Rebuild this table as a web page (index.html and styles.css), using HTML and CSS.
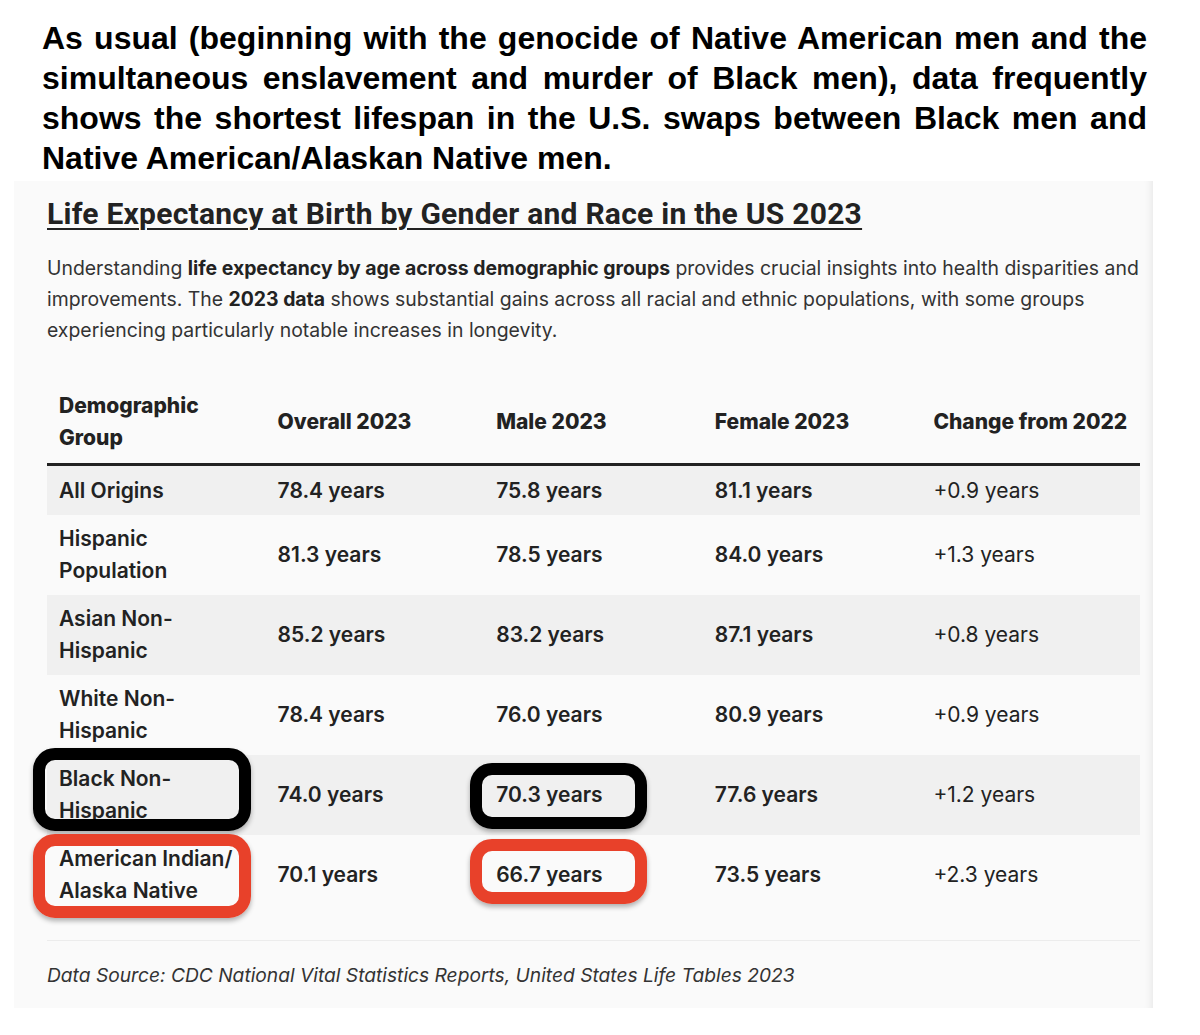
FILE: index.html
```html
<!DOCTYPE html>
<html lang="en">
<head>
<meta charset="utf-8">
<title>Life Expectancy at Birth by Gender and Race in the US 2023</title>
<link rel="stylesheet" href="styles.css">
</head>
<body>
<p class="intro">As usual (beginning with the genocide of Native American men and the simultaneous enslavement and murder of Black men), data frequently shows the shortest lifespan in the U.S. swaps between Black men and Native American/Alaskan Native men.</p>
<section class="card">
  <h2 class="title">Life Expectancy at Birth by Gender and Race in the US 2023</h2>
  <p class="lead">Understanding <strong>life expectancy by age across demographic groups</strong> provides crucial insights into health disparities and improvements. The <strong>2023 data</strong> shows substantial gains across all racial and ethnic populations, with some groups experiencing particularly notable increases in longevity.</p>
  <div class="table-wrap">
    <table class="data">
      <thead>
        <tr><th>Demographic Group</th><th>Overall 2023</th><th>Male 2023</th><th>Female 2023</th><th>Change from 2022</th></tr>
      </thead>
      <tbody>
        <tr><td class="grp">All Origins</td><td>78.4 years</td><td>75.8 years</td><td>81.1 years</td><td class="chg">+0.9 years</td></tr>
        <tr><td class="grp">Hispanic Population</td><td>81.3 years</td><td>78.5 years</td><td>84.0 years</td><td class="chg">+1.3 years</td></tr>
        <tr><td class="grp">Asian Non-Hispanic</td><td>85.2 years</td><td>83.2 years</td><td>87.1 years</td><td class="chg">+0.8 years</td></tr>
        <tr><td class="grp">White Non-Hispanic</td><td>78.4 years</td><td>76.0 years</td><td>80.9 years</td><td class="chg">+0.9 years</td></tr>
        <tr><td class="grp">Black Non-Hispanic</td><td>74.0 years</td><td>70.3 years</td><td>77.6 years</td><td class="chg">+1.2 years</td></tr>
        <tr><td class="grp">American Indian/ Alaska Native</td><td>70.1 years</td><td>66.7 years</td><td>73.5 years</td><td class="chg">+2.3 years</td></tr>
      </tbody>
    </table>
    <span class="mark mark-black mark-grp-black"></span>
    <span class="mark mark-red mark-grp-red"></span>
    <span class="mark mark-black mark-male-black"></span>
    <span class="mark mark-red mark-male-red"></span>
  </div>
  <hr class="rule">
  <p class="source">Data Source: CDC National Vital Statistics Reports, United States Life Tables 2023</p>
</section>
</body>
</html>
```

FILE: styles.css
```css
html, body {
  margin: 0;
  padding: 0;
  background: #ffffff;
}

body {
  padding: 18px 0 0 0;
}

.intro {
  margin: 0 53px 0 42px;
  font-family: "Liberation Sans", Arial, sans-serif;
  font-weight: 700;
  font-size: 32px;
  line-height: 40px;
  color: #000;
  text-align: justify;
}

.card {
  margin: 3px 0 0 14px;
  width: 1139px;
  box-sizing: border-box;
  background: #fafafa;
  padding: 15px 13px 17px 33px;
  box-shadow: inset -9px 0 8px -8px rgba(0, 0, 0, 0.09);
}

.title {
  margin: 0;
  font-family: Roboto, "Liberation Sans", sans-serif;
  font-weight: 700;
  font-size: 30px;
  line-height: 36px;
  letter-spacing: 0.25px;
  color: #222;
  text-decoration: underline;
  text-decoration-thickness: 2px;
  text-underline-offset: 4px;
}

.lead {
  margin: 21px 0 0 0;
  font-family: Inter, "Noto Sans", sans-serif;
  font-size: 19.4px;
  line-height: 31px;
  color: #333;
}

.lead strong {
  font-weight: 700;
  color: #222;
}

.table-wrap {
  position: relative;
  margin-top: 34px;
}

.data {
  width: 100%;
  border-collapse: collapse;
  table-layout: fixed;
  font-family: Inter, "Noto Sans", sans-serif;
  font-size: 21px;
  line-height: 31.5px;
  color: #222;
}

.data th {
  text-align: left;
  font-weight: 800;
  padding: 10px 12px 10px 12px;
  border-bottom: 3px solid #222;
}

.data td {
  padding: 8.5px 12px;
  font-weight: 600;
  vertical-align: middle;
}

.data td.chg {
  font-weight: 400;
}

.data tbody tr:nth-child(odd) {
  background: #f0f0f0;
}

.mark {
  position: absolute;
  box-sizing: border-box;
  border: 12px solid;
  border-radius: 22px;
  box-shadow: 0 3px 5px rgba(0, 0, 0, 0.3);
  pointer-events: none;
}

.mark-black {
  border-color: #000;
}

.mark-red {
  border-color: #e8412a;
}

.mark-grp-black {
  left: -14px;
  top: 368px;
  width: 218px;
  height: 83px;
}

.mark-grp-red {
  left: -14px;
  top: 454px;
  width: 218px;
  height: 84px;
}

.mark-male-black {
  left: 423px;
  top: 383px;
  width: 177px;
  height: 66px;
}

.mark-male-red {
  left: 423px;
  top: 459px;
  width: 177px;
  height: 65px;
}

.rule {
  margin: 25px 0 0 0;
  border: 0;
  border-top: 1px solid #ececec;
}

.source {
  margin: 19px 0 0 0;
  font-family: Inter, "Noto Sans", sans-serif;
  font-style: italic;
  font-size: 19.2px;
  line-height: 31px;
  color: #333;
}
```
